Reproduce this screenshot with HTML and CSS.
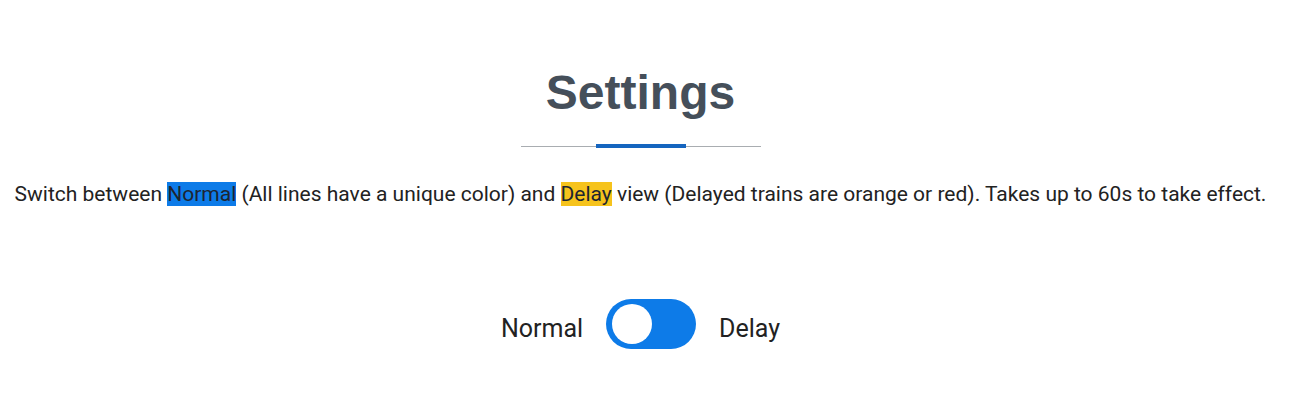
FILE: index.html
```html
<!DOCTYPE html>
<html lang="en">

<head>
    <meta charset="UTF-8">
    <meta name="viewport" content="width=device-width, initial-scale=1.0">
    <title>Settings</title>
    <link rel="stylesheet" href="styles.css">
</head>

<body>
    <div class="container">
        <h1 class="title">Settings</h1>
        <div class="divider"><span class="divider-bar"></span></div>

        <p class="intro">
            Switch between <span class="hl hl-normal">Normal</span> (All lines have a unique color) and
            <span class="hl hl-delay">Delay</span> view (Delayed trains are orange or red). Takes up to 60s to take effect.
        </p>

        <div class="mode-switch">
            <span class="mode-label">Normal</span>
            <label class="toggle">
                <input type="checkbox" class="toggle-input">
                <span class="toggle-knob"></span>
            </label>
            <span class="mode-label">Delay</span>
        </div>
    </div>
</body>

</html>
```

FILE: styles.css
```css
* {
    margin: 0;
    padding: 0;
    box-sizing: border-box
}

body {
    font-family: Roboto, 'Liberation Sans', Arial, sans-serif;
    background: #fff;
    color: #212529;
    padding-right: 26px
}

.container {
    display: flex;
    flex-direction: column;
    align-items: center;
    padding-top: 65px
}

.title {
    font-family: 'Liberation Sans', Arial, sans-serif;
    font-size: 48px;
    font-weight: 700;
    line-height: 56px;
    color: #454f5a
}

.divider {
    width: 240px;
    height: 4px;
    margin-top: 23px;
    display: flex;
    justify-content: center;
    background: linear-gradient(#a9adb1, #a9adb1) center / 100% 1px no-repeat
}

.divider-bar {
    width: 90px;
    height: 4px;
    background: #1565bf
}

.intro {
    margin-top: 34px;
    font-size: 21px;
    line-height: 24px;
    text-align: center;
    color: #222
}

.hl {
    color: #1d2530
}

.hl-normal {
    background: #0d7be8
}

.hl-delay {
    background: #f6c31c
}

.mode-switch {
    display: flex;
    align-items: center;
    gap: 23px;
    margin-top: 93px
}

.mode-label {
    font-size: 25px;
    padding-top: 8px;
    color: #222
}

.toggle {
    position: relative;
    display: block;
    width: 90px;
    height: 50px;
    border-radius: 25px;
    background: #0d7be8;
    cursor: pointer
}

.toggle-input {
    display: none
}

.toggle-knob {
    position: absolute;
    top: 5px;
    left: 6px;
    width: 40px;
    height: 40px;
    border-radius: 50%;
    background: #fff;
    transition: left .2s
}

.toggle-input:checked + .toggle-knob {
    left: 44px
}
```
